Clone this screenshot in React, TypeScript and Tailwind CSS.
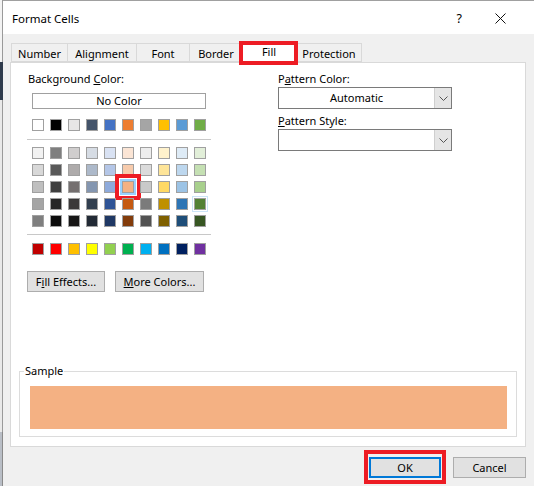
import type { ReactNode } from 'react'

const themeRow = ['#FFFFFF', '#000000', '#E7E6E6', '#44546A', '#4472C4', '#ED7D31', '#A5A5A5', '#FFC000', '#5B9BD5', '#70AD47']

const tintRows = [
  ['#F2F2F2', '#7F7F7F', '#D0CECE', '#D6DCE4', '#D9E2F3', '#FBE5D5', '#EDEDED', '#FFF2CC', '#DEEBF6', '#E2EFD9'],
  ['#D8D8D8', '#595959', '#AEABAB', '#ADB9CA', '#B4C6E7', '#F7CBAC', '#DBDBDB', '#FEE599', '#BDD7EE', '#C5E0B3'],
  ['#BFBFBF', '#3F3F3F', '#757070', '#8496B0', '#8EAADB', '#F4B183', '#C9C9C9', '#FFD965', '#9CC3E5', '#A8D08D'],
  ['#A5A5A5', '#262626', '#3A3838', '#323F4F', '#2F5496', '#C55A11', '#7B7B7B', '#BF9000', '#2E75B5', '#538135'],
  ['#7F7F7F', '#0C0C0C', '#171616', '#222A35', '#1F3864', '#833C0B', '#525252', '#7F6000', '#1E4E79', '#375623'],
]

const standardRow = ['#C00000', '#FF0000', '#FFC000', '#FFFF00', '#92D050', '#00B050', '#00B0F0', '#0070C0', '#002060', '#7030A0']

const tabs = ['Number', 'Alignment', 'Font', 'Border', 'Fill', 'Protection']
const tabWidths: Record<string, string> = {
  Number: 'w-[56px]',
  Alignment: 'w-[69px]',
  Font: 'w-[53px]',
  Border: 'w-[53px]',
  Fill: 'w-[54px]',
  Protection: 'w-[66px]',
}

function Swatch({ color, selected, hover }: { color: string; selected?: boolean; hover?: boolean }) {
  return (
    <div className="relative h-3 w-3 border border-[#a0a0a0]" style={{ backgroundColor: color }}>
      {hover && <div className="absolute -inset-[3px] border border-[#cce4f7]" />}
      {selected && (
        <>
          <div className="absolute -inset-[3px] border-2 border-[#99d1ff]" />
          <div className="absolute -inset-[8px] border-4 border-[#ed1c24]" />
        </>
      )}
    </div>
  )
}

function SwatchRow({ colors, pick }: { colors: string[]; pick?: (i: number) => { selected?: boolean; hover?: boolean } }) {
  return (
    <div className="ml-[5px] flex gap-[6px]">
      {colors.map((c, i) => (
        <Swatch key={c + i} color={c} {...(pick ? pick(i) : {})} />
      ))}
    </div>
  )
}

function Combo({ value }: { value?: string }) {
  return (
    <div className="flex h-[22px] w-[174px] border border-[#7a7a7a] bg-white">
      <div className="flex flex-1 items-center justify-center">{value}</div>
      <div className="flex w-[17px] items-center justify-center border-l border-[#cfcfcf] bg-[#e5e5e5]">
        <svg width="9" height="5" viewBox="0 0 9 5">
          <path d="M0.5 0.5 L4.5 4.5 L8.5 0.5" fill="none" stroke="#555" strokeWidth="1" />
        </svg>
      </div>
    </div>
  )
}

function Button({ children, className = '' }: { children: ReactNode; className?: string }) {
  return (
    <div className={`flex h-[21px] items-center justify-center border border-[#adadad] bg-[#e1e1e1] ${className}`}>
      {children}
    </div>
  )
}

export default function App() {
  return (
    <div
      className="flex h-[486px] w-[534px] overflow-hidden bg-[#f0f0f0] text-[11px] leading-4 text-black"
      style={{ fontFamily: '"Noto Sans", "Open Sans", sans-serif' }}
    >
      {/* Excel behind the dialog */}
      <div className="flex w-[3px] flex-col">
        <div className="h-[62px] border-r border-[#9a9a9a] bg-[#f3f3f3]" />
        <div className="h-[38px] bg-[#2f3b4c]" />
        <div className="h-[332px] border-r border-[#9a9a9a] bg-[#e9e9e9]" />
        <div className="flex-1 border-r border-[#8a8a8a] bg-[#b9bec6]" />
      </div>

      <div className="flex flex-1 flex-col border-t border-[#a0a0a0]">
        {/* Title bar */}
        <div className="flex h-[33px] items-center bg-white pl-[9px] pt-[2px]">
          <span className="text-[11.5px]">Format Cells</span>
          <span className="ml-auto mr-[33px] text-[12.5px]">?</span>
          <svg className="mr-[28px]" width="11" height="11" viewBox="0 0 11 11">
            <path d="M0.5 0.5 L10.5 10.5 M10.5 0.5 L0.5 10.5" stroke="#111" strokeWidth="1" />
          </svg>
        </div>

        {/* Tabs */}
        <div className="ml-[8px] mt-[9px] flex h-[19px]">
          {tabs.map((t) =>
            t === 'Fill' ? (
              <div key={t} className={`relative z-10 -mt-[2px] flex h-[22px] items-center justify-center border border-b-0 border-[#d9d9d9] bg-white pb-[2px] ${tabWidths[t]}`}>
                F<span>ill</span>
                <div className="absolute -left-[4px] -right-[3px] -top-[1px] bottom-[-2px] border-4 border-[#ed1c24]" />
              </div>
            ) : (
              <div key={t} className={`flex items-center justify-center border border-r-0 border-[#d9d9d9] pt-[2px] last:border-r ${tabWidths[t]}`}>
                {t}
              </div>
            )
          )}
        </div>

        {/* Panel */}
        <div className="ml-[7px] flex h-[385px] w-[516px] flex-col border border-[#d9d9d9] bg-white">
          <div className="flex pt-[8px]">
            <div className="ml-[16px] flex w-[184px] flex-col">
              <div className="pl-px">
                Background <u>C</u>olor:
              </div>
              <div className="ml-[5px] mt-[6px] flex h-4 w-[174px] items-center justify-center border border-[#a0a0a0]">
                No Color
              </div>
              <div className="mt-[10px]">
                <SwatchRow colors={themeRow} />
              </div>
              <div className="mt-[8px] h-px w-[184px] bg-[#c8c8c8]" />
              <div className="mt-[7px] flex flex-col gap-[5px]">
                {tintRows.map((row, r) => (
                  <SwatchRow
                    key={r}
                    colors={row}
                    pick={(i) => ({ selected: r === 2 && i === 5, hover: r === 3 && i === 9 })}
                  />
                ))}
              </div>
              <div className="mt-[7px] h-px w-[184px] bg-[#c8c8c8]" />
              <div className="mt-[8px]">
                <SwatchRow colors={standardRow} />
              </div>
              <div className="mt-[16px] flex gap-[10px]">
                <Button className="w-[78px]">
                  F<u>i</u>ll Effects...
                </Button>
                <Button className="w-[89px]">
                  <u>M</u>ore Colors...
                </Button>
              </div>
            </div>

            <div className="ml-[67px] flex flex-col">
              <div>
                P<u>a</u>ttern Color:
              </div>
              <div className="mt-0">
                <Combo value="Automatic" />
              </div>
              <div className="mt-[4px]">
                <u>P</u>attern Style:
              </div>
              <div className="mt-0">
                <Combo />
              </div>
            </div>
          </div>

          <fieldset className="mx-[8px] mb-[9px] mt-auto border border-[#dcdcdc] pb-[7px]">
            <legend className="ml-[4px] px-px leading-3">Sample</legend>
            <div className="ml-[10px] mr-[9px] mt-[9px] h-[43px] bg-[#F4B183]" />
          </fieldset>
        </div>

        {/* Footer */}
        <div className="mr-[8px] mt-[10px] flex justify-end gap-[12px]">
          <div className="relative flex h-[21px] w-[72px] items-center justify-center border-2 border-[#0078d7] bg-[#e1e1e1]">
            OK
            <div className="absolute -bottom-[8px] -left-[7px] -right-[7px] -top-[9px] border-4 border-[#ed1c24]" />
          </div>
          <Button className="w-[73px]">Cancel</Button>
        </div>
      </div>
    </div>
  )
}
